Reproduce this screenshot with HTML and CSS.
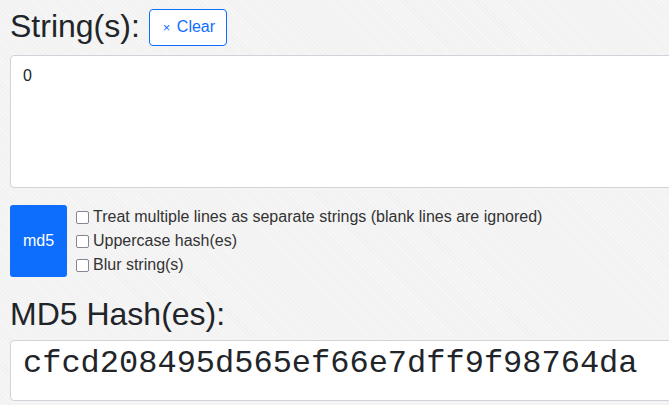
FILE: index.html
```html
<!DOCTYPE html>
<html lang="en">
<head>
<meta charset="utf-8">
<title>MD5 Hash Generator</title>
<link rel="stylesheet" href="styles.css">
</head>
<body>
<main class="page">
  <div class="title-row">
    <h2 class="heading">String(s):</h2>
    <button class="btn-clear" type="button"><span class="times">×</span> Clear</button>
  </div>
  <div class="input-box">0</div>
  <div class="controls">
    <button class="btn-hash" type="button">md5</button>
    <div class="options">
      <label class="option"><input type="checkbox" class="check"><span>Treat multiple lines as separate strings (blank lines are ignored)</span></label>
      <label class="option"><input type="checkbox" class="check"><span>Uppercase hash(es)</span></label>
      <label class="option"><input type="checkbox" class="check"><span>Blur string(s)</span></label>
    </div>
  </div>
  <h2 class="heading heading-out">MD5 Hash(es):</h2>
  <div class="output-box">cfcd208495d565ef66e7dff9f98764da</div>
</main>
</body>
</html>
```
FILE: styles.css
```css
html, body {
  margin: 0;
  padding: 0;
  overflow: hidden;
}
body {
  background-color: #f2f2f2;
  background-image: repeating-linear-gradient(45deg, rgba(255,255,255,0.35) 0 1px, rgba(0,0,0,0) 1px 3px);
  font-family: "Liberation Sans", Arial, sans-serif;
  color: #212529;
  width: 669px;
  height: 405px;
}
.page {
  padding: 7px 0 0 10px;
  width: 720px;
}
.title-row {
  display: flex;
  align-items: center;
  gap: 9px;
  height: 38px;
}
.heading {
  margin: 0;
  font-weight: 400;
  font-size: 32px;
  line-height: 38px;
  color: #212529;
}
.btn-clear {
  height: 37px;
  padding: 0 11px 0 13px;
  border: 1px solid #0d6efd;
  border-radius: 4px;
  background: #fff;
  color: #0d6efd;
  font-family: "Liberation Sans", Arial, sans-serif;
  font-size: 16px;
  margin-top: 2px;
}
.times {
  font-size: 13px;
  margin-right: 2px;
}
.input-box {
  margin-top: 10px;
  box-sizing: border-box;
  height: 133px;
  background: #fff;
  border: 1px solid #ced4da;
  border-radius: 4px;
  padding: 9px 12px;
  font-size: 16px;
  line-height: 22px;
  color: #212529;
}
.controls {
  display: flex;
  margin-top: 17px;
  gap: 9px;
}
.btn-hash {
  width: 57px;
  border: none;
  border-radius: 3px;
  background: #0d6efd;
  color: #fff;
  font-family: "Liberation Sans", Arial, sans-serif;
  font-size: 16px;
  padding: 0;
}
.options {
  display: flex;
  flex-direction: column;
}
.option {
  display: flex;
  align-items: center;
  height: 24px;
  font-size: 16px;
  color: #333;
}
.check {
  appearance: none;
  -webkit-appearance: none;
  box-sizing: border-box;
  width: 13px;
  height: 13px;
  margin: 0 4px 0 0;
  border: 1.5px solid #858594;
  border-radius: 2px;
  background: #fff;
}
.heading-out {
  margin-top: 18px;
}
.output-box {
  margin-top: 7px;
  box-sizing: border-box;
  height: 61px;
  background: #fff;
  border: 1px solid #ced4da;
  border-radius: 4px;
  padding: 4px 12px;
  font-family: "Liberation Mono", "Courier New", monospace;
  font-size: 32px;
  line-height: 38px;
  color: #212529;
}
```
